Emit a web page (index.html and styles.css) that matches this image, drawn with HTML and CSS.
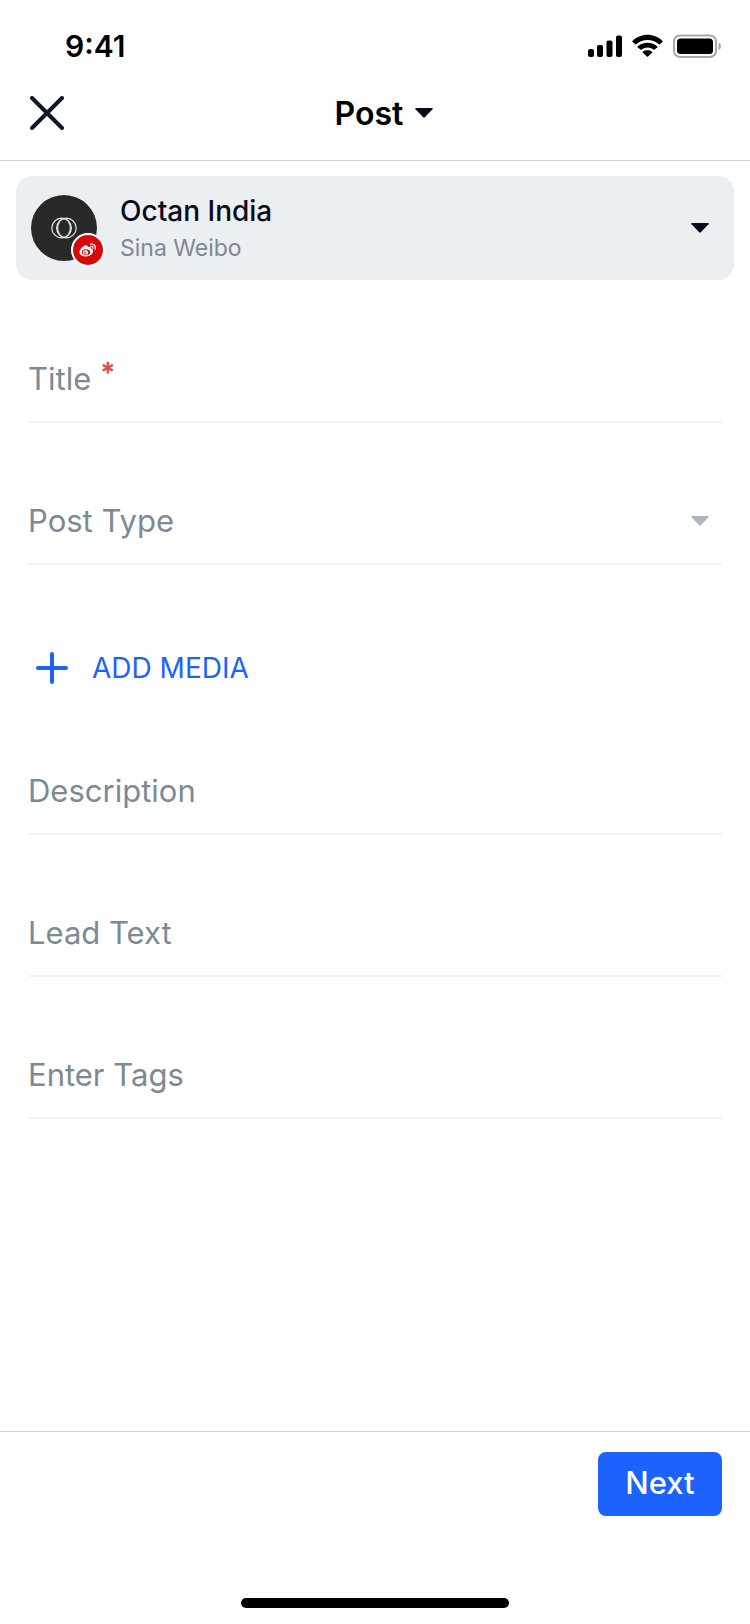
FILE: index.html
```
<!DOCTYPE html>
<html lang="en">
<head>
<meta charset="utf-8">
<meta name="viewport" content="width=device-width, initial-scale=1">
<title>Post</title>
<link rel="stylesheet" href="styles.css">
</head>
<body>
<div class="screen">
  <div class="status">
    <span class="time">9:41</span>
    <svg class="status-icons" width="134" height="24" viewBox="0 0 134 24" role="img" aria-label="Signal, Wi-Fi and battery">
      <rect x="0" y="15" width="6" height="8" rx="2"/>
      <rect x="9" y="11" width="6" height="12" rx="2"/>
      <rect x="18.500" y="6.500" width="6" height="16.500" rx="2"/>
      <rect x="28" y="1.500" width="6" height="21.500" rx="2"/>
      <path d="M59.500 0.800C65.300 0.800 70.600 3.100 74.500 6.900Q75 7.400 74.500 7.900L71.700 10.200Q71.200 10.600 70.600 10.100A16.800 16.800 0 0 0 48.400 10.100Q47.800 10.600 47.300 10.200L44.500 7.900Q44 7.400 44.500 6.900C48.400 3.100 53.700 0.800 59.500 0.800Z"/>
      <path d="M59.500 8.800C63.300 8.800 66.700 10.100 69.300 12.400Q69.800 12.900 69.300 13.400L66.500 15.500Q66 16 65.400 15.500A9.600 9.600 0 0 0 53.600 15.500Q53 16 52.500 15.500L49.700 13.400Q49.200 12.900 49.700 12.400C52.300 10.100 55.700 8.800 59.500 8.800Z"/>
      <path d="M59.500 16.300C61.300 16.300 62.900 16.800 64.100 17.700Q64.700 18.200 64.100 18.700L60.100 22.500Q59.500 23.100 58.900 22.500L54.900 18.700Q54.300 18.200 54.900 17.700C56.100 16.800 57.700 16.300 59.500 16.300Z"/>
      <rect x="86" y="1.500" width="42" height="21.500" rx="6" fill="none" stroke="#a8a8a8" stroke-width="2"/>
      <rect x="89" y="4.500" width="36" height="15.500" rx="3.500"/>
      <path d="M130.500 8.500Q133 9.500 133 12.200T130.500 16Z" fill="#a8a8a8"/>
    </svg>
  </div>

  <header class="header">
    <button class="close" type="button" aria-label="Close">
      <svg width="34" height="34" viewBox="0 0 34 34"><path d="M2 2 32 32M32 2 2 32" fill="none" stroke="#101923" stroke-width="4" stroke-linecap="round"/></svg>
    </button>
    <button class="heading" type="button">
      Post
      <svg class="caret" width="18" height="10" viewBox="0 0 18 10"><path d="M1 0H17Q18.300 0.300 17.500 1.200L9.800 9.300Q9 10 8.200 9.300L.5 1.200Q-.3.300 1 0Z"/></svg>
    </button>
  </header>

  <main class="content">
    <button class="account" type="button">
      <span class="avatar">
        <svg class="logo" width="26" height="22" viewBox="0 0 26 22" fill="none" stroke="#e6e6e6" stroke-width="1.200"><circle cx="10.600" cy="11" r="9.800"/><circle cx="15.400" cy="11" r="9.800"/><ellipse cx="13" cy="11" rx="6.300" ry="9.300"/></svg>
        <span class="badge">
          <svg width="18" height="14" viewBox="0 0 18 14">
            <path fill="#fff" d="M6.900 2.300C8.300 2 9 2.700 8.500 4.200 10.700 3.300 12.300 3.800 11.800 5.600 13.600 6.200 14.500 7.300 14 9 13.300 11.600 10.300 13.500 6.800 13.500 3.100 13.500.5 11.800.5 9.200.5 6.500 4.300 2.700 6.900 2.300Z"/>
            <ellipse cx="7" cy="9.200" rx="4.200" ry="2.900" fill="#d60a0c"/>
            <ellipse cx="6.500" cy="9.400" rx="2.600" ry="2.200" fill="#fff"/>
            <circle cx="6" cy="9.700" r="0.900" fill="#d60a0c"/>
            <path d="M11.600 1.100C14.800.5 17.100 3.100 16 6.200M12 3.400C13.400 3.100 14.300 4.200 13.900 5.400" fill="none" stroke="#fff" stroke-width="1.200" stroke-linecap="round"/>
          </svg>
        </span>
      </span>
      <span class="account-text">
        <span class="account-name">Octan India</span>
        <span class="account-network">Sina Weibo</span>
      </span>
      <svg class="caret" width="18" height="10" viewBox="0 0 18 10"><path d="M1 0H17Q18.300 0.300 17.500 1.200L9.800 9.300Q9 10 8.200 9.300L.5 1.200Q-.3.300 1 0Z"/></svg>
    </button>

    <form class="form" id="post-form">
      <div class="field">
        <label class="label" for="title">Title <span class="required">*</span></label>
        <input class="input" id="title" type="text" required>
      </div>
      <div class="field">
        <select class="select" id="post-type" aria-label="Post Type"><option>Post Type</option></select>
        <svg class="caret caret-muted" width="18" height="10" viewBox="0 0 18 10"><path d="M1 0H17Q18.300 0.300 17.500 1.200L9.800 9.300Q9 10 8.200 9.300L.5 1.200Q-.3.300 1 0Z"/></svg>
      </div>
      <button class="add-media" type="button">
        <svg width="32" height="32" viewBox="0 0 32 32"><path d="M16 2V30M2 16H30" fill="none" stroke="#1b62ff" stroke-width="4" stroke-linecap="round"/></svg>
        ADD MEDIA
      </button>
      <div class="field">
        <label class="label" for="description">Description</label>
        <input class="input" id="description" type="text">
      </div>
      <div class="field">
        <label class="label" for="lead">Lead Text</label>
        <input class="input" id="lead" type="text">
      </div>
      <div class="field">
        <label class="label" for="tags">Enter Tags</label>
        <input class="input" id="tags" type="text">
      </div>
    </form>
  </main>

  <footer class="footer">
    <button class="next" type="submit" form="post-form">Next</button>
    <div class="home-bar"></div>
  </footer>
</div>
</body>
</html>
```
FILE: styles.css
```
* {
  box-sizing: border-box;
}

body {
  margin: 0;
  background: #fff;
  color: #000;
  font-family: Inter, "Liberation Sans", sans-serif;
}

button,
input,
select {
  margin: 0;
  padding: 0;
  border: 0;
  background: none;
  color: inherit;
  font: inherit;
}

.screen {
  display: flex;
  flex-direction: column;
  min-height: 100vh;
}

.status {
  display: flex;
  align-items: center;
  justify-content: space-between;
  height: 66px;
  padding: 25px 28px 0 65px;
}

.time {
  font-size: 30px;
  font-weight: 600;
}

.header {
  display: grid;
  grid-template-columns: 1fr auto 1fr;
  align-items: center;
  height: 95px;
  padding: 0 12px 0 30px;
  border-bottom: 1px solid #cfd3d8;
}

.close {
  display: flex;
  justify-self: start;
}

.heading {
  display: flex;
  align-items: center;
  gap: 12px;
  font-size: 32px;
  font-weight: 600;
}

.caret {
  flex: none;
  fill: #0a0b18;
}

.caret-muted {
  fill: #adb5bf;
  pointer-events: none;
}

.content {
  flex: 1;
  padding: 15px 16px;
}

.account {
  display: flex;
  align-items: center;
  gap: 23px;
  width: 100%;
  height: 104px;
  padding: 0 25px 0 15px;
  border-radius: 16px;
  background: #ebeff2;
  text-align: left;
}

.avatar {
  position: relative;
  display: flex;
  flex: none;
  align-items: center;
  justify-content: center;
  width: 66px;
  height: 66px;
  border-radius: 50%;
  background: #282828;
}

.badge {
  position: absolute;
  right: -8px;
  bottom: -6px;
  display: flex;
  align-items: center;
  justify-content: center;
  width: 34px;
  height: 34px;
  border: 2px solid #fff;
  border-radius: 50%;
  background: #d60a0c;
}

.account-text {
  display: flex;
  flex: 1;
  flex-direction: column;
  padding-top: 2px;
}

.account-name {
  color: #0a0b18;
  font-size: 28px;
  font-weight: 500;
  line-height: 38px;
}

.account-network {
  color: #7c8997;
  font-size: 23px;
  line-height: 36px;
}

.form {
  display: flex;
  flex-direction: column;
  gap: 56px;
  padding: 57px 12px 0;
}

.field {
  display: flex;
  align-items: center;
  padding-bottom: 2px;
  border-bottom: 2px solid #eff1f3;
  color: #7c8997;
  font-size: 31px;
}

.label {
  flex: none;
}

.required {
  color: #de4b50;
  font-size: 28px;
  font-weight: 700;
  line-height: 1;
  vertical-align: 7px;
}

.input,
.select {
  flex: 1;
  min-width: 0;
  height: 82px;
  outline: 0;
}

.select {
  appearance: none;
}

.field .caret {
  margin: 2px 13px 0 0;
}

.add-media {
  display: flex;
  align-items: center;
  gap: 24px;
  height: 72px;
  padding: 22px 0 0 8px;
  color: #1b62ff;
  font-size: 28px;
}

.footer {
  display: flex;
  flex-direction: column;
  align-items: center;
  padding: 20px 28px 16px;
  border-top: 1px solid #cfd3d8;
}

.next {
  align-self: flex-end;
  width: 124px;
  height: 64px;
  padding-bottom: 4px;
  border-radius: 8px;
  background: #1b62ff;
  color: #fff;
  font-size: 31px;
  font-weight: 500;
}

.home-bar {
  width: 268px;
  height: 10px;
  margin-top: 82px;
  border-radius: 5px;
  background: #000;
}
```
